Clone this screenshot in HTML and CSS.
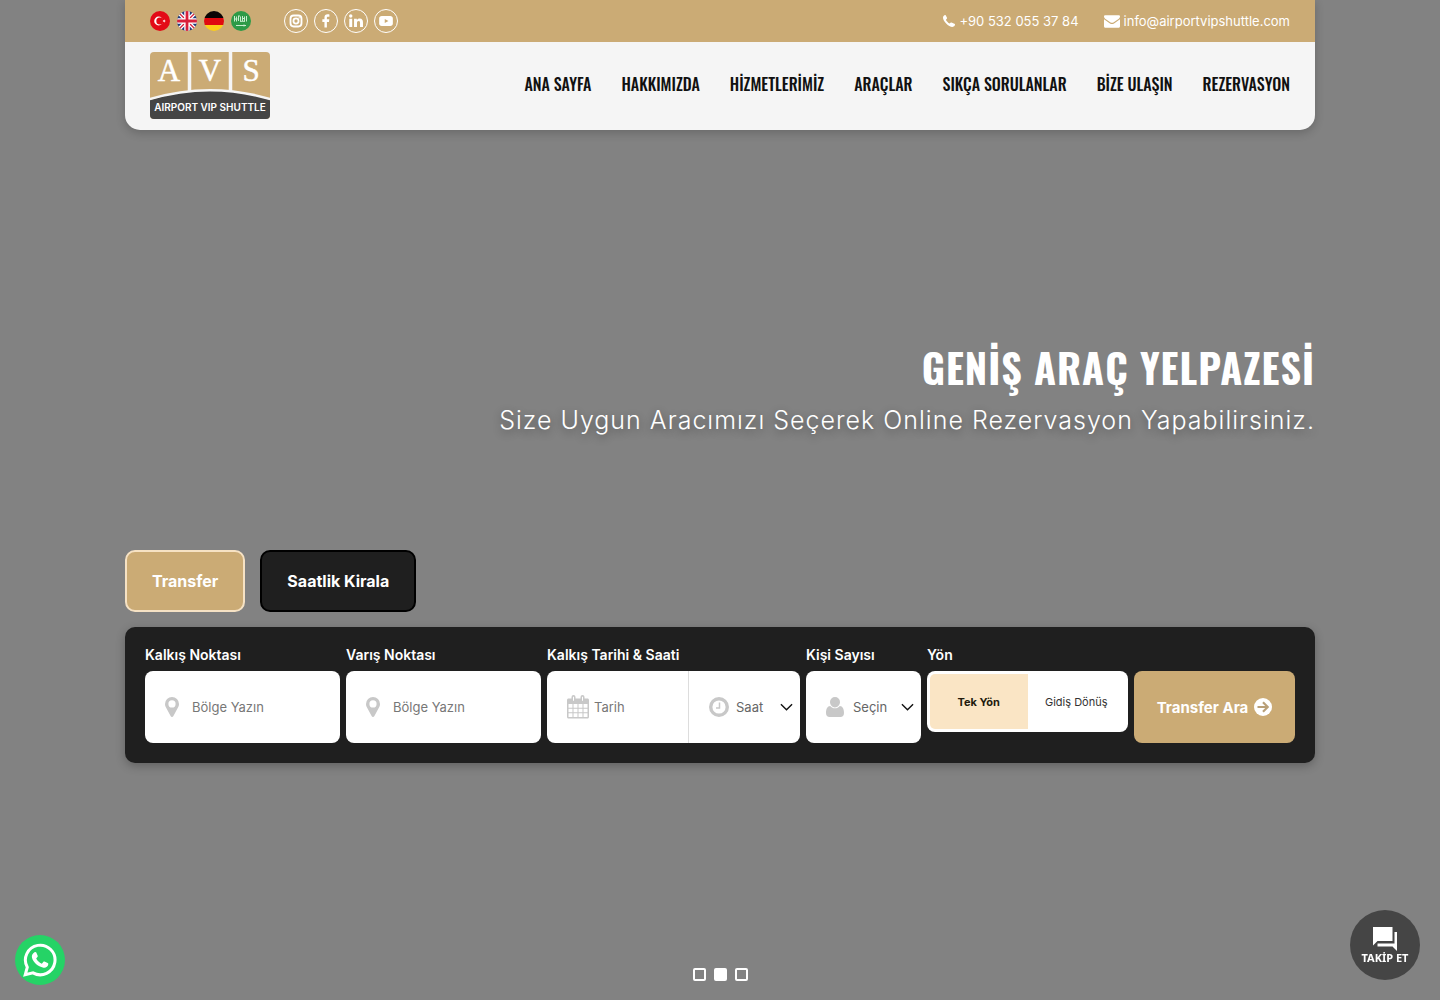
FILE: index.html
```html
<!DOCTYPE html>
<html lang="tr">
<head>
<meta charset="utf-8">
<meta name="viewport" content="width=device-width, initial-scale=1">
<title>Airport VIP Shuttle</title>
<link rel="stylesheet" href="styles.css">
</head>
<body>
<div class="page">
  <header class="header">
    <div class="topbar">
      <div class="languages">
        <a href="#tr" aria-label="Türkçe"><svg viewBox="0 0 20 20"><circle cx="10" cy="10" r="10" fill="#e30a17"/><circle cx="8.600" cy="10" r="4.400" fill="#fff"/><circle cx="9.800" cy="10" r="3.500" fill="#e30a17"/><path d="M16 10l-3.300 1.100 2-2.800v3.500l-2-2.800z" fill="#fff"/></svg></a>
        <a href="#en" aria-label="English"><svg viewBox="0 0 20 20"><defs><clipPath id="round"><circle cx="10" cy="10" r="10"/></clipPath></defs><g clip-path="url(#round)"><path d="M0 0h20v20H0z" fill="#1e3a7b"/><path d="M1 1l18 18M19 1L1 19" stroke="#fff" stroke-width="4"/><path d="M1 1l18 18M19 1L1 19" stroke="#d8203a" stroke-width="1.300"/><path d="M10 0v20M0 10h20" stroke="#fff" stroke-width="5.500"/><path d="M10 0v20M0 10h20" stroke="#d8203a" stroke-width="2.800"/></g></svg></a>
        <a href="#de" aria-label="Deutsch"><svg viewBox="0 0 20 20"><g clip-path="url(#round)"><path d="M0 0h20v7H0z" fill="#0a0505"/><path d="M0 7h20v7H0z" fill="#e00a10"/><path d="M0 14h20v6H0z" fill="#fccf18"/></g></svg></a>
        <a href="#ar" aria-label="العربية"><svg viewBox="0 0 20 20"><circle cx="10" cy="10" r="10" fill="#2d9a47"/><path d="M3.500 5v5.500M5.500 5.500v5M7.500 5v5M9.500 5.500v5M11.500 5v5M13.500 5.500v5M15.500 5v5.500M3.500 8h3M7 5h2M11.500 7.500h2M9 10.300h5" stroke="#c9ecd0" stroke-width="1" fill="none"/><path d="M5 14.500h10M13 13.500v2" stroke="#c9ecd0" stroke-width="1" fill="none"/></svg></a>
      </div>
      <div class="socials">
        <a href="#instagram" aria-label="Instagram"><svg viewBox="3 3 18 18" fill="none" stroke="#fff"><rect x="7.500" y="7.500" width="9" height="9" rx="2.600" stroke-width="1.500"/><circle cx="12" cy="12" r="2.100" stroke-width="1.500"/><circle cx="14.600" cy="9.400" r=".3" stroke-width=".7"/></svg></a>
        <a href="#facebook" aria-label="Facebook"><svg viewBox="2 2 20 20" fill="#fff"><path d="M10.600 18v-5.200H8.700v-2.300h1.900V8.800c0-1.900 1.100-2.900 2.800-2.900.8 0 1.500.1 1.700.1v2.100h-1.200c-.9 0-1.100.4-1.100 1.100v1.300H15l-.3 2.300h-1.900V18z"/></svg></a>
        <a href="#linkedin" aria-label="LinkedIn"><svg viewBox="3 3 18 18" fill="#fff"><circle cx="7.700" cy="7.900" r="1.400"/><path d="M6.500 10.200h2.400V17H6.500zM10.400 10.200h2.300v1c.4-.7 1.200-1.200 2.300-1.200 2.100 0 2.700 1.400 2.700 3.200V17h-2.400v-3.400c0-.9-.2-1.600-1.100-1.600-1 0-1.400.7-1.400 1.600V17h-2.400z"/></svg></a>
        <a href="#youtube" aria-label="YouTube"><svg viewBox="3 3 18 18"><rect x="6.400" y="7.900" width="11.200" height="8.200" rx="2.200" fill="#fff"/><path d="M11 10.300l3 1.700-3 1.700z" fill="#cbab75"/></svg></a>
      </div>
      <div class="contacts">
        <a href="tel:+905320553784"><svg class="phone-icon" viewBox="0 0 12 14"><path d="M12 10.300c0 .3-.1 1-.4 1.500-.5.7-1.400 1.200-2.300 1.200-1.600 0-4.200-1.400-6.100-3.400C1.300 7.700 0 5.400 0 3.800 0 2.700.5 1.700 1.500 1.200c.5-.3 1-.2 1.300.3L4 3.800c.2.400.1.700-.2 1l-.9.900c.3 1 2.400 3.300 3.700 3.900l.9-.9c.3-.3.600-.4 1-.2l2.900 1.300c.4.200.6.300.6.500z" fill="#fff"/></svg>+90 532 055 37 84</a>
        <a href="mailto:info@airportvipshuttle.com"><svg class="mail-icon" viewBox="0 0 16 13"><path d="M0 1.500C0 .7.600.300 1.400.300h13.200c.8 0 1.400.4 1.400 1.200 0 1-.7 1.800-1.500 2.400L9.400 7.400c-.9.600-1.900.6-2.800 0L1.500 3.900C.7 3.300 0 2.500 0 1.500zM0 4.200l6 4.200c1.300.9 2.700.9 4 0l6-4.200v7c0 .9-.6 1.500-1.400 1.500H1.400C.6 12.700 0 12.100 0 11.200z" fill="#fff"/></svg>info@airportvipshuttle.com</a>
      </div>
    </div>
    <div class="navbar">
      <a class="logo" href="#home" aria-label="Airport VIP Shuttle">
        <svg viewBox="0 0 120 67">
          <defs><clipPath id="badge"><rect width="120" height="67" rx="4"/></clipPath></defs>
          <g clip-path="url(#badge)">
            <path d="M0 0h120v67H0z" fill="#cbab75"/>
            <path d="M39.500 0v42M80.500 0v42" stroke="#f5f5f5" stroke-width="3.500"/>
            <path d="M0 48Q60 29 120 48V67H0z" fill="#454545"/>
            <path d="M-1 47.300Q60 29 121 47.300" stroke="#f5f5f5" stroke-width="2.500" fill="none"/>
          </g>
          <g class="logo-letters"><text x="19" y="29">A</text><text x="60" y="29">V</text><text x="101" y="29">S</text></g>
          <text class="logo-name" x="60" y="59">AIRPORT VIP SHUTTLE</text>
        </svg>
      </a>
      <nav class="menu">
        <a href="#home">ANA SAYFA</a>
        <a href="#about">HAKKIMIZDA</a>
        <a href="#services">HİZMETLERİMİZ</a>
        <a href="#cars">ARAÇLAR</a>
        <a href="#faq">SIKÇA SORULANLAR</a>
        <a href="#contact">BİZE ULAŞIN</a>
        <a href="#booking">REZERVASYON</a>
      </nav>
    </div>
  </header>

  <main class="main">
    <section class="caption">
      <h1>GENİŞ ARAÇ YELPAZESİ</h1>
      <p>Size Uygun Aracımızı Seçerek Online Rezervasyon Yapabilirsiniz.</p>
    </section>

    <section class="booking" id="booking">
      <div class="tabs">
        <button type="button" class="tab tab-active">Transfer</button>
        <button type="button" class="tab">Saatlik Kirala</button>
      </div>
      <form class="search">
        <div class="field">
          <label for="from">Kalkış Noktası</label>
          <div class="box">
            <svg class="pin" viewBox="0 0 14 20"><path d="M7 0a7 7 0 0 0-7 7c0 1.200.200 2 .6 2.800l5 9.300c.6 1.200 2.200 1.200 2.800 0l5-9.300c.4-.8.600-1.600.6-2.800a7 7 0 0 0-7-7zm0 3.300a3.600 3.600 0 1 1 0 7.200 3.600 3.600 0 0 1 0-7.200z"/></svg>
            <input id="from" type="text" placeholder="Bölge Yazın">
          </div>
        </div>
        <div class="field">
          <label for="to">Varış Noktası</label>
          <div class="box">
            <svg class="pin" viewBox="0 0 14 20"><path d="M7 0a7 7 0 0 0-7 7c0 1.200.200 2 .6 2.800l5 9.300c.6 1.200 2.200 1.200 2.800 0l5-9.300c.4-.8.600-1.600.6-2.800a7 7 0 0 0-7-7zm0 3.300a3.600 3.600 0 1 1 0 7.200 3.600 3.600 0 0 1 0-7.200z"/></svg>
            <input id="to" type="text" placeholder="Bölge Yazın">
          </div>
        </div>
        <div class="field">
          <label for="date">Kalkış Tarihi &amp; Saati</label>
          <div class="pair">
            <div class="box box-date">
              <svg class="calendar" viewBox="0 0 22 24"><path fill-rule="evenodd" d="M1.500 3.500h3V2a2 2 0 0 1 4 0v1.500h5V2a2 2 0 0 1 4 0v1.500h3c.8 0 1.500.7 1.500 1.500v17c0 .8-.7 1.500-1.500 1.500h-19C.7 23.500 0 22.800 0 22V5c0-.8.700-1.500 1.500-1.500zM1.500 9v3.700h4V9zm5 0v3.700h4V9zm5 0v3.700h4V9zm5 0v3.700h4V9zm-15 4.700v3.600h4v-3.600zm5 0v3.600h4v-3.600zm5 0v3.600h4v-3.600zm5 0v3.600h4v-3.600zm-15 4.600V22h4v-3.700zm5 0V22h4v-3.700zm5 0V22h4v-3.700zm5 0V22h4v-3.700zM6 1.800v4h1v-4zm9 0v4h1v-4z"/></svg>
              <input id="date" type="text" placeholder="Tarih">
            </div>
            <div class="box box-time">
              <svg class="clock" viewBox="0 0 20 20"><circle cx="10" cy="10" r="8.300" fill="none" stroke="#c8c8c8" stroke-width="3.400"/><path d="M10.500 5.500V11H7" fill="none" stroke="#c8c8c8" stroke-width="1.500"/></svg>
              <select aria-label="Saat"><option>Saat</option><option>12:00</option></select>
              <svg class="chevron" viewBox="0 0 14 8"><path d="M1 1l6 6 6-6"/></svg>
            </div>
          </div>
        </div>
        <div class="field">
          <label for="people">Kişi Sayısı</label>
          <div class="box">
            <svg class="person" viewBox="0 0 18 20"><path d="M9 0a5 5 0 0 1 5 5c0 2.800-2.300 5.400-5 5.400S4 7.800 4 5a5 5 0 0 1 5-5zM4.200 9c1.300 1.500 3 2.300 4.800 2.300s3.500-.8 4.800-2.300C16.600 9.200 18 12 18 16c0 2.500-1.400 4-3.500 4h-11C1.400 20 0 18.500 0 16c0-4 1.400-6.800 4.200-7z"/></svg>
            <select id="people"><option>Seçin</option><option>1</option></select>
            <svg class="chevron" viewBox="0 0 14 8"><path d="M1 1l6 6 6-6"/></svg>
          </div>
        </div>
        <fieldset class="field">
          <legend>Yön</legend>
          <div class="directions">
            <label><input type="radio" name="direction" checked><span>Tek Yön</span></label>
            <label><input type="radio" name="direction"><span>Gidiş Dönüş</span></label>
          </div>
        </fieldset>
        <button type="submit" class="submit">Transfer Ara
          <svg viewBox="0 0 18 18"><circle cx="9" cy="9" r="9" fill="#fff"/><path d="M3.500 9h10M9 4.300L13.700 9 9 13.700" fill="none" stroke="#b9a078" stroke-width="2.200"/></svg>
        </button>
      </form>
    </section>
  </main>

  <div class="dots">
    <button type="button" aria-label="1"></button>
    <button type="button" class="current" aria-label="2"></button>
    <button type="button" aria-label="3"></button>
  </div>
</div>

<a class="whatsapp" href="#whatsapp" aria-label="WhatsApp">
  <svg viewBox="0 0 34 34" fill="none"><path d="M2.200 31.800l2.100-7.600A14.800 14.800 0 1 1 10 29.900z" stroke="#fff" stroke-width="3"/><path d="M11.500 9.300c.6-.5 1.500-.4 1.800.3l1.400 3.200c.2.500 0 1-.3 1.300l-1.200 1.400c1.300 2.400 3 4 5.600 5.200l1.500-1.800c.3-.4.700-.5 1.200-.3l3.200 1.500c.6.300.7.700.6 1.200-.3 2.600-2.700 3.800-4.800 3.400-5.800-1.100-10.300-5.500-11.500-9.900-.7-2.300.8-4.500 2.500-5.500z" fill="#fff"/></svg>
</a>
<button type="button" class="follow">
  <svg viewBox="0 0 24 24"><path d="M0 0h19.500v14H4.500L0 18.500zM21.500 5H24v19l-4.500-4.500h-15V16.500h17z" fill="#fff"/></svg>
  TAKİP ET
</button>
</body>
</html>
```
FILE: styles.css
```css
* { box-sizing: border-box; }

body {
  margin: 0;
  background: #828282;
  color: #fff;
  font-family: Inter, "Liberation Sans", sans-serif;
  font-size: 13px;
}

a { color: inherit; text-decoration: none; }
button, input, select { font: inherit; color: inherit; }
svg { display: block; flex: none; }

.page {
  display: flex;
  flex-direction: column;
  min-height: 100vh;
  width: 100%;
  max-width: 1190px;
  margin: 0 auto;
}

/* Header */
.header {
  background: #f5f5f5;
  border-radius: 0 0 15px 15px;
  box-shadow: 0 3px 10px rgba(0, 0, 0, .2);
}
.topbar {
  display: flex;
  align-items: center;
  height: 42px;
  padding: 0 25px;
  background: #cbab75;
}
.languages, .socials { display: flex; }
.languages { gap: 7px; }
.languages svg { width: 20px; height: 20px; }
.socials { gap: 6px; margin-left: 33px; }
.socials a {
  width: 24px;
  height: 24px;
  border: 1px solid #fff;
  border-radius: 50%;
}
.contacts { display: flex; gap: 25px; margin-left: auto; }
.contacts a { display: flex; align-items: center; gap: 4px; }
.phone-icon { width: 12px; height: 14px; }
.mail-icon { width: 16px; height: 13px; }

.navbar {
  display: flex;
  align-items: flex-start;
  justify-content: space-between;
  padding: 10px 25px 11px;
}
.logo svg { width: 120px; height: 67px; }
.logo-letters {
  font: 31px "Liberation Serif", serif;
  fill: #fff;
  stroke: #fff;
  stroke-width: .5;
  text-anchor: middle;
}
.logo-name {
  font: 600 10px Inter, sans-serif;
  fill: #fff;
  text-anchor: middle;
}
.menu {
  display: flex;
  gap: 30px;
  color: #111;
  font: 500 16px/64px Oswald, "Liberation Sans Narrow", sans-serif;
}

/* Slide caption */
.caption {
  margin-top: 207px;
  text-align: right;
}
.caption h1 {
  margin: 0;
  font: bold 40px/60px Oswald, "Liberation Sans Narrow", sans-serif;
  letter-spacing: 1px;
}
.caption p {
  margin: 5px 0 0;
  font-size: 25px;
  font-weight: 300;
  line-height: 36px;
  letter-spacing: 1px;
  text-shadow: 0 3px 8px rgba(0, 0, 0, .4);
}

/* Booking form */
.booking { margin-top: 112px; }
.tabs { display: flex; gap: 15px; }
.tab {
  height: 62px;
  padding: 0 25px;
  background: #1f1f1f;
  border: 2px solid #000;
  border-radius: 10px;
  font-size: 16px;
  font-weight: 700;
}
.tab-active { background: #cbab75; border-color: #f6e2c4; }

.search {
  display: grid;
  grid-template-columns: 195fr 195fr 253fr 115fr 201fr 161fr;
  gap: 6px;
  margin-top: 15px;
  padding: 20px;
  background: #1f1f1f;
  border-radius: 10px;
  box-shadow: 0 3px 10px rgba(0, 0, 0, .25);
}
.field { min-width: 0; margin: 0; padding: 0; border: 0; }
.field > label, .field > legend {
  display: block;
  margin: 0 0 8px;
  padding: 0;
  font-size: 14px;
  font-weight: 600;
  line-height: 16px;
}
.box {
  display: flex;
  align-items: center;
  min-width: 0;
  height: 72px;
  padding: 0 7px 0 20px;
  background: #fff;
  border-radius: 8px;
  color: #777;
}
.box path { fill: #c8c8c8; }
.box input, .box select {
  flex: 1;
  width: 0;
  min-width: 0;
  padding: 0;
  border: 0;
  outline: 0;
  background: none;
  appearance: none;
}
.box input::placeholder { color: #777; opacity: 1; }
.box select { color: #666; }
.pin { width: 14px; height: 20px; margin-right: 13px; }
.calendar { width: 22px; height: 24px; margin-right: 5px; }
.clock { width: 20px; height: 20px; margin-right: 7px; }
.person { width: 18px; height: 20px; margin-right: 9px; }
.box .clock path { fill: none; }
.chevron { width: 13px; height: 8px; }
.box .chevron path { fill: none; stroke: #111; stroke-width: 1.5; }
.pair { display: grid; grid-template-columns: 142fr 111fr; }
.box-date { border-right: 1px solid #ddd; border-radius: 8px 0 0 8px; }
.box-time { border-radius: 0 8px 8px 0; }

.directions {
  display: grid;
  grid-template-columns: 1fr 1fr;
  height: 61px;
  padding: 3px;
  background: #fff;
  border-radius: 8px;
  color: #333;
  font-size: 11px;
}
.directions label { display: grid; }
.directions input { grid-area: 1 / 1; margin: 0; appearance: none; }
.directions span {
  grid-area: 1 / 1;
  display: flex;
  align-items: center;
  justify-content: center;
  border-radius: 5px 0 0 5px;
}
.directions input:checked + span {
  background: #fae5c5;
  color: #221a0d;
  font-weight: 700;
}

.submit {
  display: flex;
  align-items: center;
  justify-content: center;
  gap: 6px;
  height: 72px;
  margin-top: 24px;
  padding: 0;
  background: #cbab75;
  border: 0;
  border-radius: 8px;
  font-size: 15px;
  font-weight: 700;
}
.submit svg { width: 18px; height: 18px; }

/* Slider dots */
.dots {
  display: flex;
  justify-content: center;
  gap: 8px;
  margin-top: auto;
  padding: 20px 0 19px;
}
.dots button {
  width: 13px;
  height: 13px;
  padding: 0;
  background: none;
  border: 2px solid #fff;
  border-radius: 2px;
}
.dots .current { background: #fff; }

/* Floating buttons */
.whatsapp, .follow { position: fixed; border-radius: 50%; }
.whatsapp {
  left: 15px;
  bottom: 15px;
  display: grid;
  place-items: center;
  width: 50px;
  height: 50px;
  background: #25d366;
}
.whatsapp svg { width: 34px; height: 34px; }
.follow {
  right: 20px;
  bottom: 20px;
  display: flex;
  flex-direction: column;
  align-items: center;
  justify-content: center;
  gap: 1px;
  width: 70px;
  height: 70px;
  padding: 0;
  background: #454545;
  border: 0;
  font: 700 11px/12px "Noto Sans", "Open Sans", sans-serif;
}
.follow svg { width: 24px; height: 24px; }
```
